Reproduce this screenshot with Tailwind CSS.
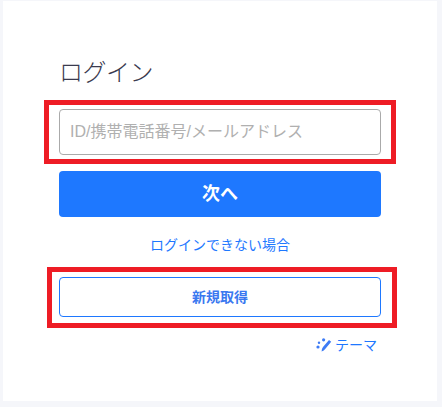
<!DOCTYPE html>
<html lang="ja">
<head>
    <meta charset="UTF-8">
    <title>ログイン</title>
    <script src="https://cdn.jsdelivr.net/npm/@tailwindcss/browser@4"></script>
</head>
<body class="bg-[#f5f6fa] font-['Liberation_Sans','Noto_Sans_CJK_JP',sans-serif]">
    <div class="relative w-[442px] h-[407px] overflow-hidden pt-px pl-[3px]">
        <!-- Card -->
        <div class="w-[434px] h-[400px] bg-white pl-[56px] pt-[55px]">
            <h2 class="text-[24px] leading-[34px] text-[#3a3a4e] font-light tracking-[-0.5px]">ログイン</h2>

            <input type="text" placeholder="ID/携帯電話番号/メールアドレス"
                class="block mt-[19px] w-[322px] h-[46px] px-[10px] border border-[#aaaaaa] rounded-[4px] text-[16px] bg-white outline-none placeholder:text-[#b0b0b0]">

            <button class="block mt-[16px] w-[322px] h-[46px] rounded-[4px] bg-[#1e78ff] text-white text-[18px] font-bold">次へ</button>

            <div class="mt-[18px] w-[322px] text-center leading-[20px]">
                <a href="#" class="text-[14px] leading-[20px] text-[#1e78ff]">ログインできない場合</a>
            </div>

            <button class="block mt-[22px] w-[322px] h-[40px] rounded-[4px] border border-[#1e78ff] bg-white text-[#3a78f0] text-[14px] font-bold">新規取得</button>

            <div class="mt-[18px] w-[318px] flex justify-end items-center gap-[3px] text-[14px] leading-[20px] text-[#1e78ff]">
                <svg width="16" height="14" viewBox="0 0 16 14" fill="#3d7bf5">
                    <path d="M13 2 L15.2 3.8 L9.4 10.8 Q8 13.2 5.6 13.4 Q5.6 10.8 7 9 Z"/>
                    <circle cx="7.6" cy="1.8" r="1.6"/>
                    <circle cx="3" cy="4.8" r="1.2"/>
                    <circle cx="2" cy="9" r="1.6"/>
                </svg>
                <span>テーマ</span>
            </div>
        </div>

        <!-- Red annotation boxes -->
        <div class="absolute left-[44px] top-[100px] w-[352px] h-[64px] border-[5px] border-[#ee1c25]"></div>
        <div class="absolute left-[47px] top-[267px] w-[350px] h-[61px] border-[5px] border-[#ee1c25]"></div>
    </div>
</body>
</html>
